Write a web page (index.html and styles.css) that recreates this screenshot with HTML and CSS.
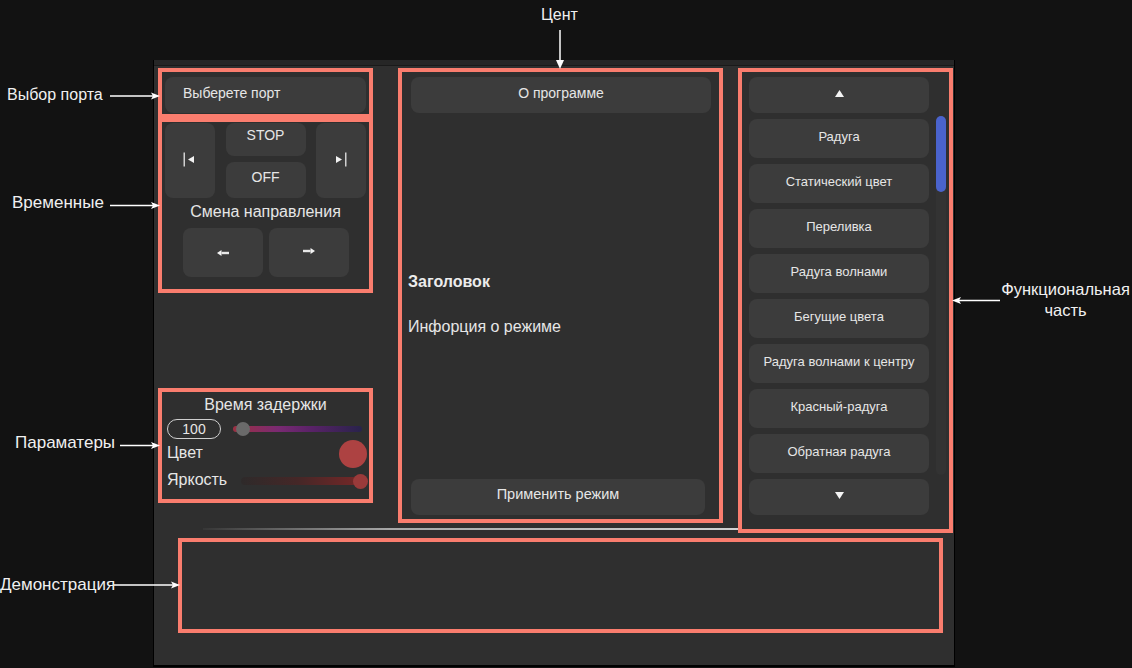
FILE: index.html
```html
<!DOCTYPE html>
<html lang="ru">
<head>
<meta charset="utf-8">
<title>LED</title>
<link rel="stylesheet" href="styles.css">
</head>
<body>
  <div class="note note-center">Цент</div>
  <div class="note note-port">Выбор порта</div>
  <div class="note note-time">Временные</div>
  <div class="note note-params">Параматеры</div>
  <div class="note note-demo">Демонстрация</div>
  <div class="note note-func">Функциональная<br>часть</div>

  <div class="window">
    <div class="titlebar"></div>
    <div class="body">
      <div class="col-left">
        <section class="mark port">
          <button class="btn port-btn">Выберете порт</button>
        </section>
        <section class="mark timing">
          <div class="transport">
            <button class="btn skip skip-prev">
              <svg width="12" height="15" viewBox="0 0 12 15"><rect x="0.5" y="0.5" width="1.5" height="14" fill="#d0d0d0"/><polygon points="5,7.5 11,4 11,11" fill="#f2f2f2"/></svg>
            </button>
            <button class="btn stop">STOP</button>
            <button class="btn off">OFF</button>
            <button class="btn skip skip-next">
              <svg width="12" height="15" viewBox="0 0 12 15"><polygon points="7,7.5 1,4 1,11" fill="#f2f2f2"/><rect x="10" y="0.5" width="1.5" height="14" fill="#d0d0d0"/></svg>
            </button>
          </div>
          <div class="dir-label">Смена направления</div>
          <div class="dir-row">
            <button class="btn dir dir-left">
              <svg width="12" height="6" viewBox="0 0 12 6"><polygon points="0,3 4.5,0 4.5,6" fill="#f4f4f4"/><rect x="4.5" y="1.8" width="7.5" height="2.4" fill="#e8e8e8"/></svg>
            </button>
            <button class="btn dir dir-right">
              <svg width="12" height="6" viewBox="0 0 12 6"><rect x="0" y="1.8" width="7.5" height="2.4" fill="#e8e8e8"/><polygon points="12,3 7.5,0 7.5,6" fill="#f4f4f4"/></svg>
            </button>
          </div>
        </section>
        <section class="mark params">
          <div class="p-title">Время задержки</div>
          <div class="p-row p-delay">
            <div class="pill">100</div>
            <div class="slider slider-delay">
              <div class="track"></div>
              <div class="thumb" style="left: 3px"></div>
            </div>
          </div>
          <div class="p-row p-color">
            <span class="p-label">Цвет</span>
            <span class="swatch"></span>
          </div>
          <div class="p-row p-bright">
            <span class="p-label">Яркость</span>
            <div class="slider slider-bright">
              <div class="track"></div>
              <div class="thumb" style="left: 112px"></div>
            </div>
          </div>
        </section>
      </div>

      <section class="mark center">
        <button class="btn about">О программе</button>
        <div class="info">
          <div class="info-title">Заголовок</div>
          <div class="info-text">Инфорция о режиме</div>
        </div>
        <button class="btn apply">Применить режим</button>
      </section>

      <section class="mark modes">
        <div class="mode-list">
          <button class="btn arrow-btn">
            <svg width="9" height="7" viewBox="0 0 9 7"><polygon points="4.5,0 9,7 0,7" fill="#f4f4f4"/></svg>
          </button>
          <button class="btn mode">Радуга</button>
          <button class="btn mode">Статический цвет</button>
          <button class="btn mode">Переливка</button>
          <button class="btn mode">Радуга волнами</button>
          <button class="btn mode">Бегущие цвета</button>
          <button class="btn mode">Радуга волнами к центру</button>
          <button class="btn mode">Красный-радуга</button>
          <button class="btn mode">Обратная радуга</button>
          <button class="btn arrow-btn">
            <svg width="9" height="7" viewBox="0 0 9 7"><polygon points="0,0 9,0 4.5,7" fill="#f4f4f4"/></svg>
          </button>
        </div>
        <div class="scrollbar"><div class="scroll-thumb"></div></div>
      </section>

      <div class="divider"></div>

      <section class="mark demo"></section>
    </div>
  </div>

  <svg class="arrows" width="1132" height="668" viewBox="0 0 1132 668">
    <g stroke="#ffffff" stroke-width="1.5" fill="none">
      <line x1="560" y1="30" x2="560" y2="62"/>
      <line x1="110" y1="96" x2="153" y2="96"/>
      <line x1="110" y1="205.5" x2="153" y2="205.5"/>
      <line x1="120" y1="445.5" x2="153" y2="445.5"/>
      <line x1="114" y1="585" x2="173" y2="585"/>
      <line x1="1000" y1="300.5" x2="959" y2="300.5"/>
    </g>
    <g fill="#ffffff">
      <polygon points="556,60 564,60 560,69 "/>
      <polygon points="151,92.5 160,96 151,99.5 153,96"/>
      <polygon points="151,202 160,205.5 151,209 153,205.5"/>
      <polygon points="151,442 160,445.5 151,449 153,445.5"/>
      <polygon points="171,581.5 180,585 171,588.5 173,585"/>
      <polygon points="961,297 952,300.5 961,304 959,300.5"/>
    </g>
  </svg>
</body>
</html>
```

FILE: styles.css
```css
* {
  box-sizing: border-box;
}

html,
body {
  margin: 0;
  padding: 0;
}

body {
  position: relative;
  width: 1132px;
  height: 668px;
  overflow: hidden;
  background: #121212;
  font-family: "Liberation Sans", Arial, sans-serif;
  color: #e6e6e6;
}

/* ---------- annotations ---------- */
.note {
  position: absolute;
  font-size: 16px;
  line-height: 18px;
  color: #f0f0f0;
  white-space: nowrap;
  z-index: 4;
}

.note-center { left: 541px; top: 6px; }
.note-port { left: 7px; top: 86px; }
.note-time { left: 12px; top: 194px; font-size: 17px; }
.note-params { left: 15px; top: 434px; font-size: 17px; }
.note-demo { left: 0; top: 576px; font-size: 17px; }

.note-func {
  left: 999px;
  top: 279px;
  width: 133px;
  text-align: center;
  font-size: 16.5px;
  line-height: 21px;
}

.arrows {
  position: absolute;
  left: 0;
  top: 0;
  pointer-events: none;
  z-index: 5;
}

/* ---------- window ---------- */
.window {
  position: absolute;
  left: 153px;
  top: 60px;
  width: 802px;
  height: 607px;
  background: #2f2f2f;
  border-left: 1px solid #000;
  border-right: 1px solid #000;
  border-bottom: 2px solid #000;
}

.titlebar {
  height: 6px;
  background: #262626;
  border-bottom: 1px solid #1a1a1a;
}

.body {
  display: grid;
  grid-template-columns: 215px 25px 325px 15px 215px;
  grid-template-rows: 455px 10px auto;
  padding: 2px 0 0 4px;
}

.mark {
  border: 4px solid #fa7d6e;
}

.btn {
  display: flex;
  align-items: center;
  justify-content: center;
  margin: 0;
  padding: 0 0 4px 0;
  border: none;
  border-radius: 8px;
  background: #3c3c3c;
  color: #e6e6e6;
  font-family: inherit;
  font-size: 14px;
  line-height: 16px;
}

/* ---------- left column ---------- */
.col-left {
  grid-column: 1;
  grid-row: 1;
  display: flex;
  flex-direction: column;
}

.port {
  height: 50px;
  padding: 5px 3px 0 3px;
}

.port-btn {
  width: 201px;
  height: 36px;
  justify-content: flex-start;
  padding-left: 18px;
}

.timing {
  height: 175px;
  padding: 1px 0 0 3px;
}

.transport {
  display: grid;
  width: 201px;
  grid-template-columns: 50px 1fr 50px;
  grid-template-rows: 33px 36px;
  row-gap: 6px;
}

.skip {
  grid-row: 1 / 3;
  padding-bottom: 0;
}

.skip-prev {
  grid-column: 1;
}

.skip-prev svg {
  margin: 0 3px 3px 0;
}

.skip-next {
  grid-column: 3;
}

.skip-next svg {
  margin: 0 0 3px 0;
}

.stop,
.off {
  grid-column: 2;
  justify-self: center;
  width: 80px;
}

.stop {
  grid-row: 1;
  padding-bottom: 10px;
}

.off {
  grid-row: 2;
  padding-bottom: 6px;
}

.dir-label {
  margin: 5px 0 0 -3px;
  font-size: 16px;
  line-height: 18px;
  text-align: center;
}

.dir-row {
  display: flex;
  justify-content: center;
  gap: 6px;
  margin: 7px 0 0 -3px;
}

.dir {
  width: 80px;
  height: 49px;
  padding-bottom: 0;
}

.dir-right svg {
  margin-bottom: 4px;
}

.params {
  height: 115px;
  margin-top: 95px;
  padding-top: 4px;
}

.p-title {
  font-size: 16px;
  line-height: 18px;
  text-align: center;
}

.p-row {
  display: flex;
  padding: 0 2px 0 5px;
}

.p-label {
  font-size: 16px;
  line-height: 18px;
}

.p-delay {
  margin-top: 5px;
  height: 20px;
  align-items: center;
}

.pill {
  width: 54px;
  height: 20px;
  border: 1px solid #cfcfcf;
  border-radius: 10px;
  font-size: 14px;
  line-height: 18px;
  text-align: center;
}

.slider {
  position: relative;
  height: 14px;
}

.slider .track {
  position: absolute;
  left: 0;
  right: 0;
  top: 4px;
  height: 6px;
  border-radius: 3px;
}

.slider .thumb {
  position: absolute;
  top: 0;
  width: 14px;
  height: 14px;
  border-radius: 50%;
}

.slider-delay {
  width: 129px;
  margin-left: 12px;
}

.slider-delay .track {
  background: linear-gradient(to right, #9c3042, #7a2a72 35%, #5a2268 60%, #28234b);
}

.slider-delay .thumb {
  background: #6a6a6a;
}

.p-color {
  margin-top: 1px;
  height: 28px;
  justify-content: space-between;
  align-items: flex-start;
}

.p-color .p-label {
  margin-top: 4px;
}

.swatch {
  width: 28px;
  height: 28px;
  border-radius: 50%;
  background: #ad4242;
}

.p-bright {
  margin-top: 1px;
  height: 20px;
  align-items: flex-start;
}

.p-bright .p-label {
  margin-top: 2px;
}

.slider-bright {
  width: 126px;
  margin: 5px 0 0 auto;
}

.slider-bright .track {
  top: 3px;
  height: 8px;
  border-radius: 4px;
  background: linear-gradient(to right, #2e2a2a, #452727 45%, #6c2727 85%, #762929);
}

.slider-bright .thumb {
  width: 15px;
  height: 15px;
  top: -0.5px;
  background: #9a3a3a;
}

/* ---------- center ---------- */
.center {
  grid-column: 3;
  grid-row: 1;
  display: flex;
  flex-direction: column;
}

.about {
  height: 36px;
  margin: 5px 8px 0 9px;
}

.info {
  margin-top: 160px;
  padding-left: 6px;
}

.info-title {
  font-size: 16px;
  line-height: 18px;
  font-weight: bold;
  color: #ececec;
}

.info-text {
  margin-top: 27px;
  font-size: 16px;
  line-height: 18px;
}

.apply {
  height: 36px;
  margin: auto 14px 4px 9px;
  padding-bottom: 6px;
  font-size: 14.5px;
}

/* ---------- modes ---------- */
.modes {
  grid-column: 5;
  grid-row: 1 / 3;
  display: flex;
  padding: 5px 0 0 7px;
}

.mode-list {
  display: flex;
  flex-direction: column;
  gap: 6px;
  width: 180px;
}

.mode-list .btn {
  font-size: 13px;
}

.arrow-btn {
  height: 36px;
}

.mode {
  height: 39px;
}

.scrollbar {
  width: 10px;
  height: 359px;
  margin: 39px 0 0 7px;
  border-radius: 5px;
  background: #333333;
}

.scroll-thumb {
  height: 76px;
  border-radius: 5px;
  background: #4a63cc;
}

/* ---------- bottom ---------- */
.divider {
  grid-column: 1 / 5;
  grid-row: 2;
  align-self: start;
  height: 2px;
  margin: 5px 0 0 45px;
  background: linear-gradient(to right, rgba(190, 190, 190, 0.05), #a8a8a8 35%, #d2d2d2);
}

.demo {
  grid-column: 1 / 6;
  grid-row: 3;
  width: 765px;
  height: 95px;
  margin: 5px 0 0 20px;
}
```
